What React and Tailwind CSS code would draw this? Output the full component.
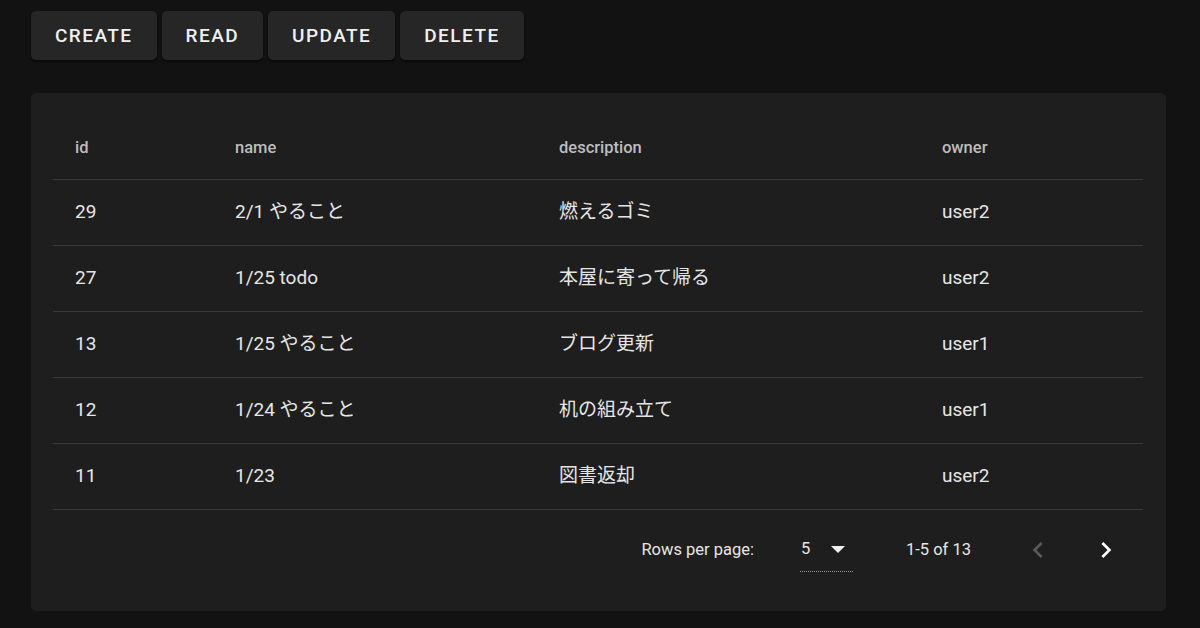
import React from 'react';

const rows = [
  { id: 29, name: '2/1 やること', description: '燃えるゴミ', owner: 'user2' },
  { id: 27, name: '1/25 todo', description: '本屋に寄って帰る', owner: 'user2' },
  { id: 13, name: '1/25 やること', description: 'ブログ更新', owner: 'user1' },
  { id: 12, name: '1/24 やること', description: '机の組み立て', owner: 'user1' },
  { id: 11, name: '1/23', description: '図書返却', owner: 'user2' },
];

const font = { fontFamily: 'Roboto, "Noto Sans CJK JP", sans-serif' };

const ActionButton = ({ label }) => (
  <button
    type="button"
    className="h-[49px] px-[24px] pt-[2px] rounded-[5px] bg-[#262626] text-[#f0f0f0] text-[19px] font-medium tracking-[1.45px] shadow-[0_2px_2px_rgba(0,0,0,0.5)]"
  >
    {label}
  </button>
);

const App = () => {
  return (
    <div className="w-[1200px] h-[628px] bg-[#121212] overflow-hidden pt-[11px] px-[31px]" style={font}>
      <div className="flex gap-[5px]">
        <ActionButton label="CREATE" />
        <ActionButton label="READ" />
        <ActionButton label="UPDATE" />
        <ActionButton label="DELETE" />
      </div>

      <div className="mt-[33px] w-[1135px] rounded-[5px] bg-[#1e1e1e] pl-[22px] pr-[23px] pt-[21px] pb-[22px]">
        <table className="w-full border-collapse">
          <thead>
            <tr className="h-[65px] border-b border-[#393939]">
              <th className="w-[160px] pl-[22px] pt-[4px] text-left text-[16.5px] font-medium text-[#bdbdbd]">id</th>
              <th className="w-[324px] pl-[22px] pt-[4px] text-left text-[16.5px] font-medium text-[#bdbdbd]">name</th>
              <th className="w-[383px] pl-[22px] pt-[4px] text-left text-[16.5px] font-medium text-[#bdbdbd]">description</th>
              <th className="pl-[22px] pt-[4px] text-left text-[16.5px] font-medium text-[#bdbdbd]">owner</th>
            </tr>
          </thead>
          <tbody>
            {rows.map((r) => (
              <tr key={r.id} className="h-[66px] border-b border-[#393939]">
                <td className="pl-[22px] text-[19px] text-[#e6e6e6]">{r.id}</td>
                <td className="pl-[22px] text-[19px] text-[#e6e6e6]">{r.name}</td>
                <td className="pl-[22px] text-[19px] text-[#e6e6e6]">{r.description}</td>
                <td className="pl-[22px] text-[19px] text-[#e6e6e6]">{r.owner}</td>
              </tr>
            ))}
          </tbody>
        </table>

        <div className="h-[79px] pt-[2px] flex items-center justify-end text-[16.5px] text-[#e6e6e6]">
          <span>Rows per page:</span>
          <div className="ml-[46px] relative flex items-center h-[44px] w-[53px] border-b border-dotted border-[#9a9a9a]">
            <span className="pl-[1px] text-[16.5px]">5</span>
            <svg className="absolute right-[8px] top-[18px]" width="14" height="8" viewBox="0 0 14 8">
              <path d="M0 0 L14 0 L7 7 Z" fill="#f0f0f0" />
            </svg>
          </div>
          <span className="ml-[53px]">1-5 of 13</span>
          <div className="ml-[51px] flex items-center gap-[36px] mr-[21px]">
            <svg width="32" height="32" viewBox="0 0 24 24">
              <path d="M15.41 7.41 14 6l-6 6 6 6 1.41-1.41L10.83 12z" fill="#5a5a5a" />
            </svg>
            <svg width="32" height="32" viewBox="0 0 24 24">
              <path d="M10 6 8.59 7.41 13.17 12l-4.58 4.59L10 18l6-6z" fill="#ffffff" />
            </svg>
          </div>
        </div>
      </div>
    </div>
  );
};

export default App;
